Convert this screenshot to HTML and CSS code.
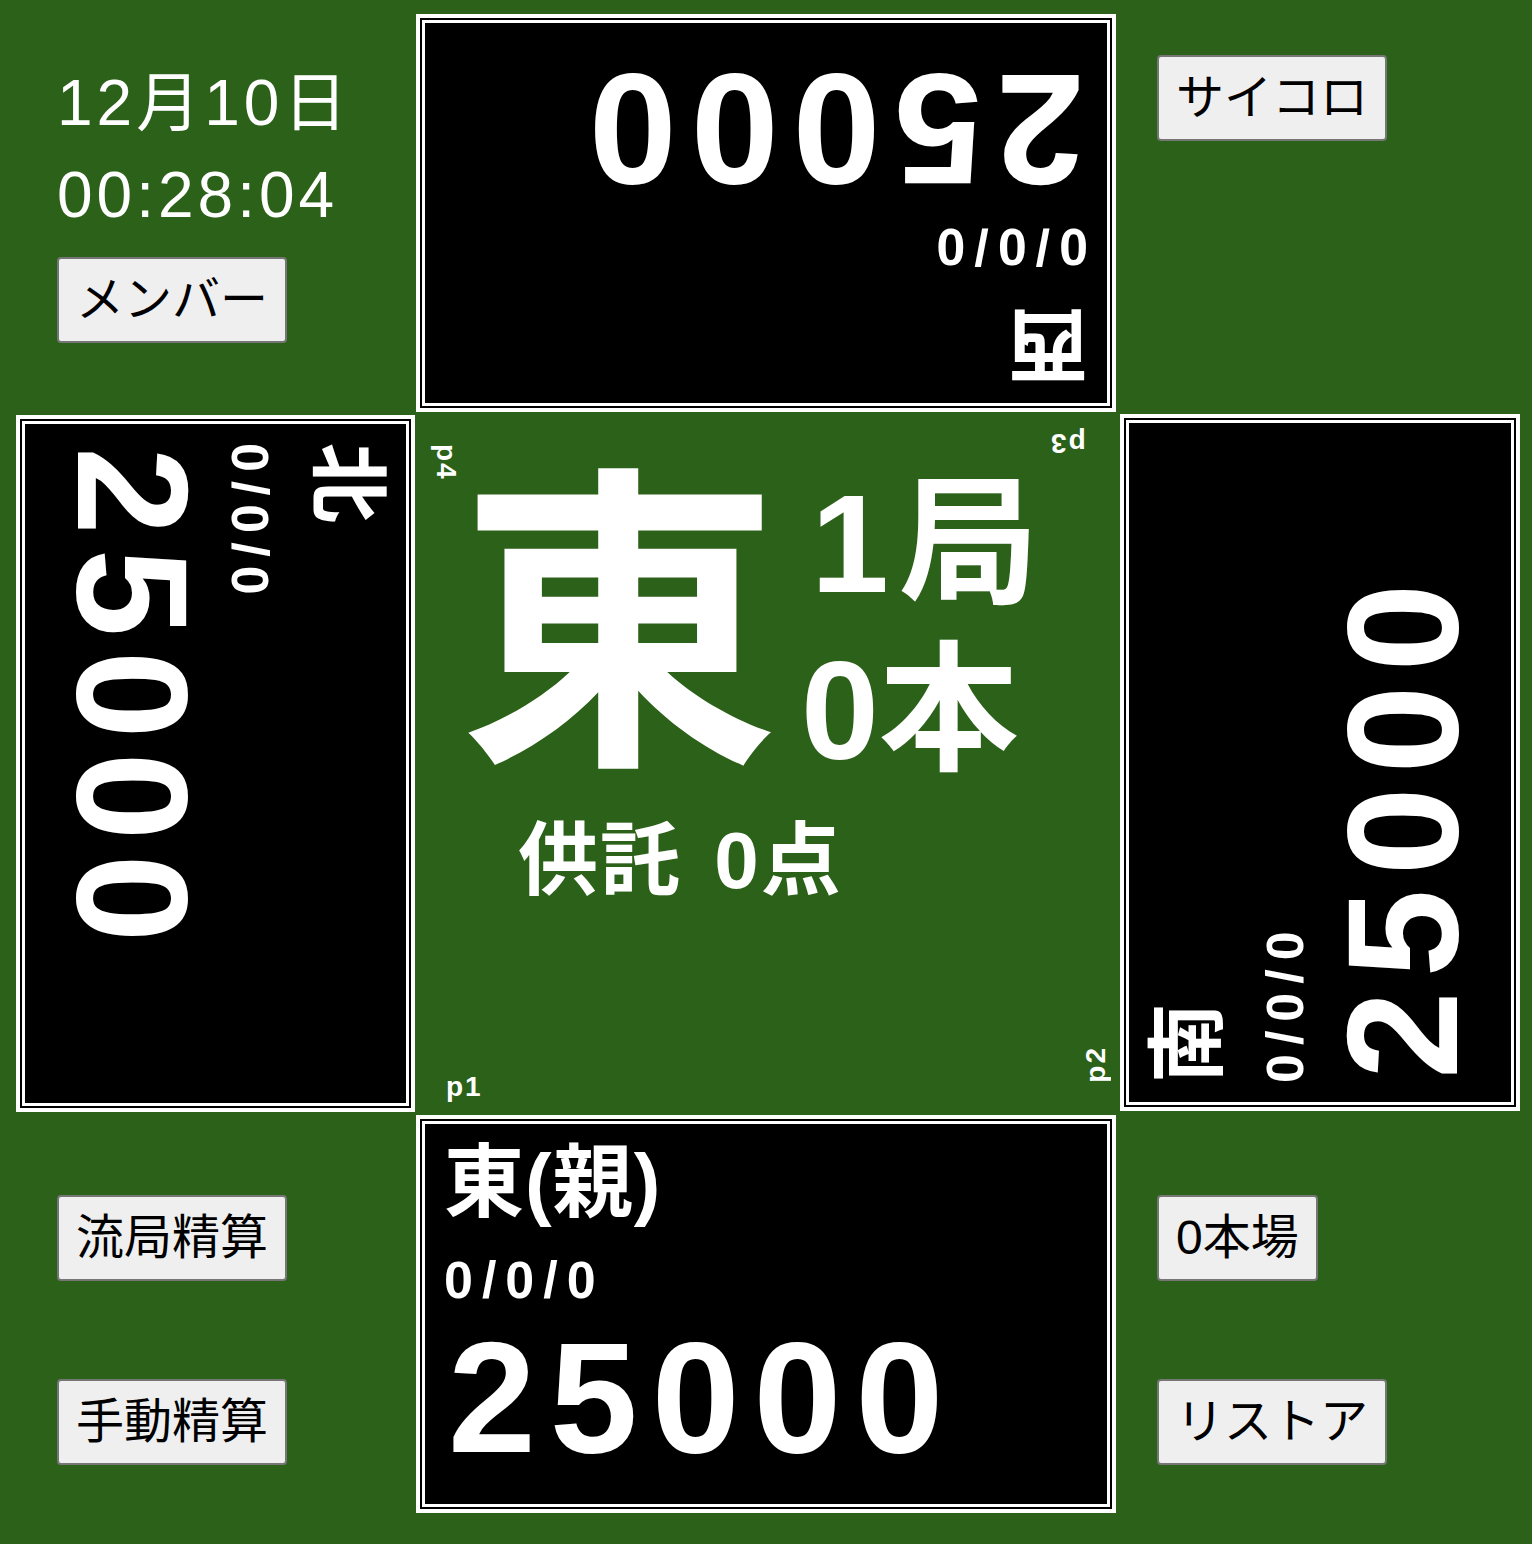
FILE: index.html
```html
<!DOCTYPE html>
<html lang="ja">
<head>
<meta charset="utf-8">
<title>点数表示</title>
<link rel="stylesheet" href="styles.css">
</head>
<body>
<div class="board">
  <div class="corner corner-tl">
    <div class="clock">12月10日</div>
    <div class="clock">00:28:04</div>
    <button class="btn btn-first">メンバー</button>
  </div>

  <div class="seat seat-top">
    <div class="seat-name">西</div>
    <div class="seat-record">0/0/0</div>
    <div class="seat-points">25000</div>
  </div>

  <div class="corner corner-tr">
    <button class="btn">サイコロ</button>
  </div>

  <div class="seat seat-left">
    <div class="seat-name">北</div>
    <div class="seat-record">0/0/0</div>
    <div class="seat-points">25000</div>
  </div>

  <div class="center">
    <div class="round-row">
      <div class="wind">東</div>
      <div class="round-info">
        <div class="kyoku">1局</div>
        <div>0本</div>
      </div>
    </div>
    <div class="kyotaku">供託 0点</div>
    <span class="plabel p1">p1</span>
    <span class="plabel p2">p2</span>
    <span class="plabel p3">p3</span>
    <span class="plabel p4">p4</span>
  </div>

  <div class="seat seat-right">
    <div class="seat-name">南</div>
    <div class="seat-record">0/0/0</div>
    <div class="seat-points">25000</div>
  </div>

  <div class="corner corner-bl">
    <button class="btn">流局精算</button>
    <button class="btn">手動精算</button>
  </div>

  <div class="seat seat-bottom">
    <div class="seat-name">東(親)</div>
    <div class="seat-record">0/0/0</div>
    <div class="seat-points">25000</div>
  </div>

  <div class="corner corner-br">
    <button class="btn">0本場</button>
    <button class="btn">リストア</button>
  </div>
</div>
</body>
</html>
```

FILE: styles.css
```css
html, body {
  margin: 0;
  padding: 0;
  background: #2c6119;
}

body {
  width: 1532px;
  height: 1544px;
  overflow: hidden;
  font-family: "Liberation Sans", "Noto Sans CJK JP", sans-serif;
  color: #fff;
}

.board {
  display: grid;
  grid-template-columns: 400px 700px 404px;
  grid-template-rows: 398px 703px 398px;
  margin: 14px 0 0 16px;
}

/* corner cells */
.corner {
  display: flex;
  flex-direction: column;
  align-items: flex-start;
}

.corner-tl {
  padding: 43px 0 0 41px;
}

.corner-tr {
  padding: 41px 0 0 41px;
}

.corner-bl {
  padding: 80px 0 0 41px;
  gap: 98px;
}

.corner-br {
  padding: 80px 0 0 41px;
  gap: 98px;
}

.clock {
  font-size: 64px;
  line-height: 92px;
  font-weight: normal;
  letter-spacing: 4px;
  white-space: nowrap;
}

.btn {
  box-sizing: border-box;
  height: 86px;
  min-width: 0;
  padding: 0 17px;
  margin: 0;
  border: 2px solid #767676;
  border-radius: 4px;
  background: #efefef;
  color: #000;
  font-family: "Liberation Sans", "Noto Sans CJK JP", sans-serif;
  font-size: 48px;
  line-height: 1;
  white-space: nowrap;
}

.corner-tl .btn,
.corner-tr .btn,
.corner-bl .btn,
.corner-br .btn:last-child {
  width: 230px;
}

.btn-first {
  margin: 16px 0 0 0;
}

/* player seats */
.seat {
  box-sizing: border-box;
  border: 4px solid #fff;
  box-shadow: inset 0 0 0 2px #000, inset 0 0 0 5px #fff;
  background: #000;
  padding: 24px;
  color: #fff;
  font-weight: bold;
  overflow: hidden;
  white-space: nowrap;
}

.seat-top {
  width: 700px;
  height: 398px;
  transform: rotate(180deg);
}

.seat-bottom {
  width: 700px;
  height: 398px;
}

.seat-left {
  width: 399px;
  height: 697px;
  margin-top: 3px;
  writing-mode: vertical-rl;
  text-orientation: sideways;
}

.seat-right {
  width: 400px;
  height: 697px;
  margin: 2px 0 0 4px;
  writing-mode: vertical-rl;
  text-orientation: sideways;
  transform: rotate(180deg);
}

.seat-name {
  font-size: 80px;
  line-height: 1;
  letter-spacing: 1px;
}

.seat-record {
  font-size: 52px;
  line-height: 1;
  margin-block-start: 31px;
  letter-spacing: 9px;
}

.seat-points {
  font-size: 158px;
  line-height: 1;
  margin-block-start: 12px;
  margin-inline-start: 4px;
  letter-spacing: 14px;
}

/* center */
.center {
  position: relative;
  padding: 28px 0 0 43px;
  font-weight: bold;
  font-family: "Liberation Sans", "Noto Sans CJK JP", sans-serif;
}

.round-row {
  display: flex;
  align-items: flex-start;
}

.wind {
  margin-top: 29px;
  font-size: 320px;
  line-height: 1;
}

.round-info {
  margin: 20px 0 0 22px;
  font-size: 140px;
  line-height: 167px;
}

.kyoku {
  text-indent: 10px;
  letter-spacing: 10px;
}

.kyotaku {
  margin: 27px 0 0 59px;
  font-size: 80px;
  line-height: 1;
  word-spacing: 8px;
  letter-spacing: 2px;
}

.plabel {
  position: absolute;
  font-family: "Liberation Sans", sans-serif;
  font-size: 28px;
  line-height: 1;
  font-weight: bold;
  letter-spacing: 2px;
  color: #fff;
}

.p1 {
  left: 30px;
  top: 661px;
}

.p2 {
  right: 6px;
  bottom: 32px;
  writing-mode: vertical-rl;
  text-orientation: sideways;
  transform: rotate(180deg);
}

.p3 {
  right: 30px;
  top: 17px;
  transform: rotate(180deg);
}

.p4 {
  left: 16px;
  top: 32px;
  writing-mode: vertical-rl;
  text-orientation: sideways;
}
```
